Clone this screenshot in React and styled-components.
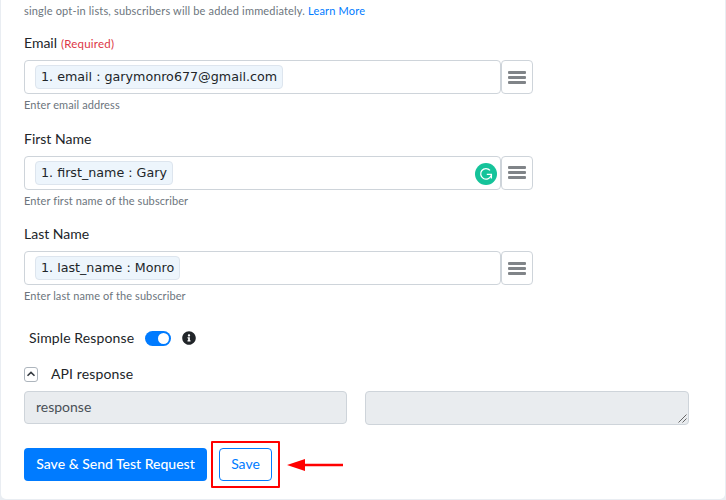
import React from "react";
import styled, { createGlobalStyle } from "styled-components";
import { FaInfoCircle } from "react-icons/fa";

const GlobalStyle = createGlobalStyle`
    html, body {
        margin: 0;
        height: 500px;
        overflow: hidden;
        background: #e9edf2;
    }
    * {
        box-sizing: border-box;
    }
`;

const fields = [
    { label: "Email", required: true, chip: "1. email : garymonro677@gmail.com", help: "Enter email address" },
    { label: "First Name", chip: "1. first_name : Gary", help: "Enter first name of the subscriber", grammarly: true },
    { label: "Last Name", chip: "1. last_name : Monro", help: "Enter last name of the subscriber" },
];

const App = () => (
    <>
        <GlobalStyle />
        <Card>
            <Intro>
                single opt-in lists, subscribers will be added immediately. <LearnMore>Learn More</LearnMore>
            </Intro>
            <Fields>
                {fields.map(({ label, required, chip, help, grammarly }) => (
                    <Field key={label}>
                        <Label>
                            {label}
                            {required && <Required>(Required)</Required>}
                        </Label>
                        <InputRow>
                            <TagInput>
                                <Chip>{chip}</Chip>
                                {grammarly && <GrammarlyBadge />}
                            </TagInput>
                            <MenuButton>
                                <MenuLine />
                                <MenuLine />
                                <MenuLine />
                            </MenuButton>
                        </InputRow>
                        <Help>{help}</Help>
                    </Field>
                ))}
            </Fields>
            <SimpleRow>
                <RowText>Simple Response</RowText>
                <Toggle />
                <FaInfoCircle size={14} color="#212529" />
            </SimpleRow>
            <ApiRow>
                <Collapse>
                    <svg width="10" height="10" viewBox="0 0 10 10" fill="none" stroke="#343a40" strokeWidth="1.6">
                        <path d="M1.5 6.8 5 3.4l3.5 3.4" />
                    </svg>
                </Collapse>
                <RowText>API response</RowText>
            </ApiRow>
            <ResponseRow>
                <ReadOnlyBox>response</ReadOnlyBox>
                <ReadOnlyBox $resizable>
                    <ResizeGrip width="9" height="9" viewBox="0 0 9 9" stroke="#444" strokeWidth="0.8">
                        <path d="M0.5 8.5 8.5 0.5M4.5 8.5l4-4" />
                    </ResizeGrip>
                </ReadOnlyBox>
            </ResponseRow>
            <ActionRow>
                <PrimaryButton>Save &amp; Send Test Request</PrimaryButton>
                <Highlight>
                    <OutlineButton>Save</OutlineButton>
                </Highlight>
                <ArrowIcon width="56" height="14" viewBox="0 0 56 14">
                    <path d="M0 7 18 1v4.8h38v2.4H18V13z" fill="#f00" />
                </ArrowIcon>
            </ActionRow>
        </Card>
    </>
);

const GrammarlyBadge = () => (
    <Grammarly>
        <svg width="16" height="16" viewBox="0 0 16 16" fill="none" stroke="#fff" strokeWidth="1.3">
            <path d="M13 9.6A5.3 5.3 0 1 1 12 4.4" />
            <path d="M8.8 8.4h4.6v4.2" />
        </svg>
    </Grammarly>
);

const Card = styled.div`
    margin-left: 1px;
    width: 724px;
    height: 499px;
    padding: 0 23px;
    background: #fff;
    border-radius: 0 0 5px 5px;
    font-family: "Lato", "Noto Sans", sans-serif;
    color: #212529;
`;

const Intro = styled.div`
    padding-top: 3px;
    height: 34px;
    font-size: 11px;
    line-height: 15px;
    letter-spacing: 0.17px;
    color: #6c757d;
`;

const LearnMore = styled.a`
    color: #007bff;
`;

const Fields = styled.div`
    display: flex;
    flex-direction: column;
    gap: 16.5px;
`;

const Field = styled.div`
    display: flex;
    flex-direction: column;
`;

const Label = styled.div`
    height: 26px;
    font-size: 14px;
    line-height: 17px;
`;

const Required = styled.span`
    margin-left: 4px;
    font-size: 11.5px;
    letter-spacing: 0.2px;
    color: #dc3545;
`;

const InputRow = styled.div`
    display: flex;
    height: 34px;
`;

const TagInput = styled.div`
    position: relative;
    display: flex;
    align-items: center;
    width: 477px;
    padding-left: 10px;
    border: 1px solid #ced4da;
    border-radius: 4px;
`;

const Chip = styled.span`
    height: 24px;
    padding: 0 5px;
    background: #edf5fc;
    border: 1px solid #dde5ee;
    border-radius: 4px;
    font-family: "DejaVu Sans", sans-serif;
    font-size: 12.7px;
    line-height: 22px;
    white-space: nowrap;
`;

const Grammarly = styled.span`
    position: absolute;
    right: 3px;
    top: 6px;
    display: flex;
    align-items: center;
    justify-content: center;
    width: 22px;
    height: 22px;
    background: #15c39a;
    border-radius: 50%;
`;

const MenuButton = styled.div`
    display: flex;
    flex-direction: column;
    align-items: center;
    justify-content: center;
    gap: 2px;
    width: 32px;
    border: 1px solid #ced4da;
    border-radius: 4px;
`;

const MenuLine = styled.span`
    width: 18px;
    height: 3px;
    background: #808488;
    border-radius: 1px;
`;

const Help = styled.div`
    margin-top: 3px;
    height: 16px;
    font-size: 11px;
    line-height: 15px;
    letter-spacing: 0.1px;
    color: #6c757d;
`;

const SimpleRow = styled.div`
    display: flex;
    align-items: center;
    margin-top: 24px;
    padding-left: 5px;
    height: 20px;

    svg {
        margin-left: 11px;
    }
`;

const RowText = styled.span`
    font-size: 14px;
    letter-spacing: 0.12px;
    line-height: 20px;
`;

const Toggle = styled.span`
    position: relative;
    margin-left: 11px;
    width: 26px;
    height: 15px;
    background: #007bff;
    border-radius: 8px;

    &::after {
        content: "";
        position: absolute;
        right: 2px;
        top: 2px;
        width: 11px;
        height: 11px;
        background: #fff;
        border-radius: 50%;
    }
`;

const ApiRow = styled.div`
    display: flex;
    align-items: center;
    gap: 13px;
    margin-top: 16px;
    height: 20px;
`;

const Collapse = styled.span`
    display: flex;
    align-items: center;
    justify-content: center;
    width: 14px;
    height: 15px;
    border: 1px solid #adb5bd;
    border-radius: 3px;
`;

const ResponseRow = styled.div`
    display: grid;
    grid-template-columns: 323px 324px;
    gap: 18px;
    margin-top: 7px;
`;

const ReadOnlyBox = styled.div`
    position: relative;
    height: ${(p) => (p.$resizable ? "34px" : "33px")};
    padding-left: 11px;
    background: #e9ecef;
    border: 1px solid #ced4da;
    border-radius: 4px;
    font-size: 14px;
    line-height: 29px;
    color: #495057;
`;

const ResizeGrip = styled.svg`
    position: absolute;
    right: 1px;
    bottom: 1px;
`;

const ActionRow = styled.div`
    display: flex;
    align-items: center;
    margin-top: 16px;
`;

const PrimaryButton = styled.div`
    width: 183px;
    height: 33px;
    background: #007bff;
    border-radius: 4px;
    font-size: 14px;
    font-weight: 500;
    line-height: 31px;
    text-align: center;
    color: #fff;
`;

const Highlight = styled.div`
    margin-left: 4px;
    padding: 5px 6px;
    border: 2px solid #f00;
    border-radius: 1px;
`;

const OutlineButton = styled.div`
    width: 53px;
    height: 33px;
    border: 1px solid #007bff;
    border-radius: 4px;
    font-size: 14px;
    line-height: 29px;
    text-align: center;
    color: #007bff;
`;

const ArrowIcon = styled.svg`
    margin-left: 7px;
`;

export default App;
